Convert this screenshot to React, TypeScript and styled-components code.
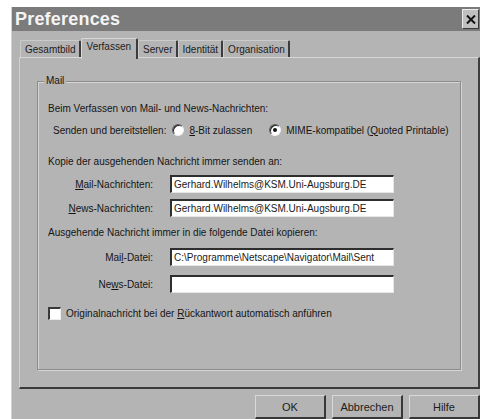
import React from "react";
import styled, { createGlobalStyle } from "styled-components";

const Global = createGlobalStyle`
  html, body {
    margin: 0;
    padding: 0;
    background: #ffffff;
    overflow: hidden;
  }
  body {
    font-family: "Liberation Sans", Arial, sans-serif;
    font-size: 10px;
    color: #141414;
  }
`;

const Window = styled.div`
  margin: 7px 0 0 11px;
  width: 469px;
  height: 412px;
  background: #b4b4b4;
  border-left: 1px solid #d2d2d2;
  box-sizing: border-box;
  display: flex;
  flex-direction: column;
`;

const TitleBar = styled.div`
  height: 24px;
  background: #7b7b7b;
  display: flex;
  align-items: center;
  justify-content: space-between;
  padding: 0 1px 0 3px;
`;

const Title = styled.span`
  font-family: "Liberation Sans", Arial, sans-serif;
  font-weight: 700;
  font-size: 18px;
  color: #f4f4f4;
  letter-spacing: 0.2px;
`;

const CloseButton = styled.div`
  width: 15px;
  height: 18px;
  background: #c0c0c0;
  border-top: 1px solid #ececec;
  border-left: 1px solid #ececec;
  border-right: 1px solid #3a3a3a;
  border-bottom: 1px solid #3a3a3a;
  display: flex;
  align-items: center;
  justify-content: center;
`;

const Body = styled.div`
  flex: 1;
  display: flex;
  flex-direction: column;
  padding: 7px 0 0 7px;
`;

const TabStrip = styled.div`
  display: flex;
  align-items: flex-end;
  height: 19px;
  padding-left: 1px;
  position: relative;
  z-index: 1;
`;

const Tab = styled.div<{ $active?: boolean }>`
  box-sizing: border-box;
  height: ${(p) => (p.$active ? "21px" : "17px")};
  margin-bottom: ${(p) => (p.$active ? "-2px" : "0")};
  padding: ${(p) => (p.$active ? "2px 5px 0 5px" : "1px 3px 0 4px")};
  display: flex;
  align-items: ${(p) => (p.$active ? "flex-start" : "center")};
  background: #b4b4b4;
  border-top: 1px solid ${(p) => (p.$active ? "#d8d8d8" : "#cbcbcb")};
  border-left: 1px solid ${(p) => (p.$active ? "#d8d8d8" : "#cbcbcb")};
  border-right: 2px solid #3c3c3c;
  border-radius: 2px 2px 0 0;
  white-space: nowrap;
  color: #1c1c1c;
`;

const Panel = styled.div`
  box-sizing: border-box;
  height: 332px;
  border-top: 1px solid #d6d6d6;
  border-left: 1px solid #d0d0d0;
  border-right: 2px solid #3e3e3e;
  border-bottom: 2px solid #3a3a3a;
  padding: 23px 17px 0 17px;
`;

const GroupBox = styled.div`
  position: relative;
  box-sizing: border-box;
  height: 289px;
  border: 1px solid #8c8c8c;
  box-shadow: inset 1px 1px 0 #d4d4d4, 1px 1px 0 #d4d4d4;
  padding: 20px 0 0 10px;
`;

const Legend = styled.span`
  position: absolute;
  top: -8px;
  left: 6px;
  padding: 0 2px;
  background: #b4b4b4;
  line-height: 14px;
`;

const Line = styled.div<{ $gap: number }>`
  margin-top: ${(p) => p.$gap}px;
  line-height: 14px;
  height: 14px;
  white-space: nowrap;
  display: flex;
  align-items: center;
`;

const OptionRow = styled.div<{ $gap: number }>`
  margin-top: ${(p) => p.$gap}px;
  margin-left: 5px;
  height: 16px;
  display: flex;
  align-items: center;
  white-space: nowrap;
`;

const Radio = styled.span<{ $checked?: boolean; $gapLeft: number }>`
  box-sizing: border-box;
  flex: 0 0 12px;
  width: 12px;
  height: 12px;
  margin-left: ${(p) => p.$gapLeft}px;
  margin-right: 5px;
  border-radius: 50%;
  background: #ffffff;
  border: 1px solid;
  border-color: #5a5a5a #f0f0f0 #f0f0f0 #5a5a5a;
  box-shadow: inset 1px 1px 0 #1e1e1e;
  display: flex;
  align-items: center;
  justify-content: center;
  &::after {
    content: "";
    width: 4px;
    height: 4px;
    border-radius: 50%;
    background: ${(p) => (p.$checked ? "#111" : "transparent")};
  }
`;

const FieldRow = styled.div<{ $gap: number }>`
  margin-top: ${(p) => p.$gap}px;
  display: grid;
  grid-template-columns: 105px 224px;
  column-gap: 17px;
  align-items: center;
`;

const FieldLabel = styled.span`
  text-align: right;
  white-space: nowrap;
`;

const TextBox = styled.div`
  box-sizing: border-box;
  height: 18px;
  background: #ffffff;
  border-top: 2px solid #2e2e2e;
  border-left: 2px solid #2e2e2e;
  border-right: 1px solid #e6e6e6;
  border-bottom: 1px solid #e6e6e6;
  padding: 0 0 0 2px;
  line-height: 15px;
  white-space: nowrap;
  overflow: hidden;
  color: #1a1a1a;
`;

const CheckRow = styled.div<{ $gap: number }>`
  margin-top: ${(p) => p.$gap}px;
  height: 14px;
  display: flex;
  align-items: center;
  white-space: nowrap;
`;

const CheckBox = styled.span`
  box-sizing: border-box;
  flex: 0 0 13px;
  width: 13px;
  height: 13px;
  margin-right: 5px;
  background: #ffffff;
  border-top: 2px solid #3a3a3a;
  border-left: 2px solid #3a3a3a;
  border-right: 1px solid #ededed;
  border-bottom: 1px solid #ededed;
`;

const Key = styled.span`
  text-decoration: underline;
  text-underline-offset: 1px;
`;

const ButtonBar = styled.div`
  display: flex;
  justify-content: flex-end;
  gap: 6px;
  margin-top: 6px;
`;

const Button = styled.div`
  box-sizing: border-box;
  width: 71px;
  height: 24px;
  background: #b4b4b4;
  border-top: 1px solid #d8d8d8;
  border-left: 1px solid #d8d8d8;
  border-right: 2px solid #383838;
  border-bottom: 2px solid #383838;
  display: flex;
  align-items: center;
  justify-content: center;
  font-size: 11px;
  color: #1c1c1c;
`;

export default function App() {
  return (
    <>
      <Global />
      <Window>
        <TitleBar>
          <Title>Preferences</Title>
          <CloseButton>
            <svg width="10" height="9" viewBox="0 0 10 9">
              <path d="M1 0.5 L9 8.5 M9 0.5 L1 8.5" stroke="#111" strokeWidth="2" />
            </svg>
          </CloseButton>
        </TitleBar>
        <Body>
          <TabStrip>
            <Tab>Gesamtbild</Tab>
            <Tab $active>Verfassen</Tab>
            <Tab>Server</Tab>
            <Tab>Identität</Tab>
            <Tab>Organisation</Tab>
          </TabStrip>
          <Panel>
            <GroupBox>
              <Legend>Mail</Legend>
              <Line $gap={0}>Beim Verfassen von Mail- und News-Nachrichten:</Line>
              <OptionRow $gap={6}>
                Senden und bereitstellen:
                <Radio $gapLeft={6} />
                <span>
                  <Key>8</Key>-Bit zulassen
                </span>
                <Radio $gapLeft={17} $checked />
                <span>
                  MIME-kompatibel (<Key>Q</Key>uoted Printable)
                </span>
              </OptionRow>
              <Line $gap={17}>Kopie der ausgehenden Nachricht immer senden an:</Line>
              <FieldRow $gap={6}>
                <FieldLabel>
                  <Key>M</Key>ail-Nachrichten:
                </FieldLabel>
                <TextBox>Gerhard.Wilhelms@KSM.Uni-Augsburg.DE</TextBox>
              </FieldRow>
              <FieldRow $gap={6}>
                <FieldLabel>
                  <Key>N</Key>ews-Nachrichten:
                </FieldLabel>
                <TextBox>Gerhard.Wilhelms@KSM.Uni-Augsburg.DE</TextBox>
              </FieldRow>
              <Line $gap={9}>Ausgehende Nachricht immer in die folgende Datei kopieren:</Line>
              <FieldRow $gap={8}>
                <FieldLabel>
                  Mai<Key>l</Key>-Datei:
                </FieldLabel>
                <TextBox>C:\Programme\Netscape\Navigator\Mail\Sent</TextBox>
              </FieldRow>
              <FieldRow $gap={9}>
                <FieldLabel>
                  Ne<Key>w</Key>s-Datei:
                </FieldLabel>
                <TextBox />
              </FieldRow>
              <CheckRow $gap={13}>
                <CheckBox />
                <span>
                  Originalnachricht bei der <Key>R</Key>ückantwort automatisch anführen
                </span>
              </CheckRow>
            </GroupBox>
          </Panel>
          <ButtonBar>
            <Button>OK</Button>
            <Button>Abbrechen</Button>
            <Button>Hilfe</Button>
          </ButtonBar>
        </Body>
      </Window>
    </>
  );
}
